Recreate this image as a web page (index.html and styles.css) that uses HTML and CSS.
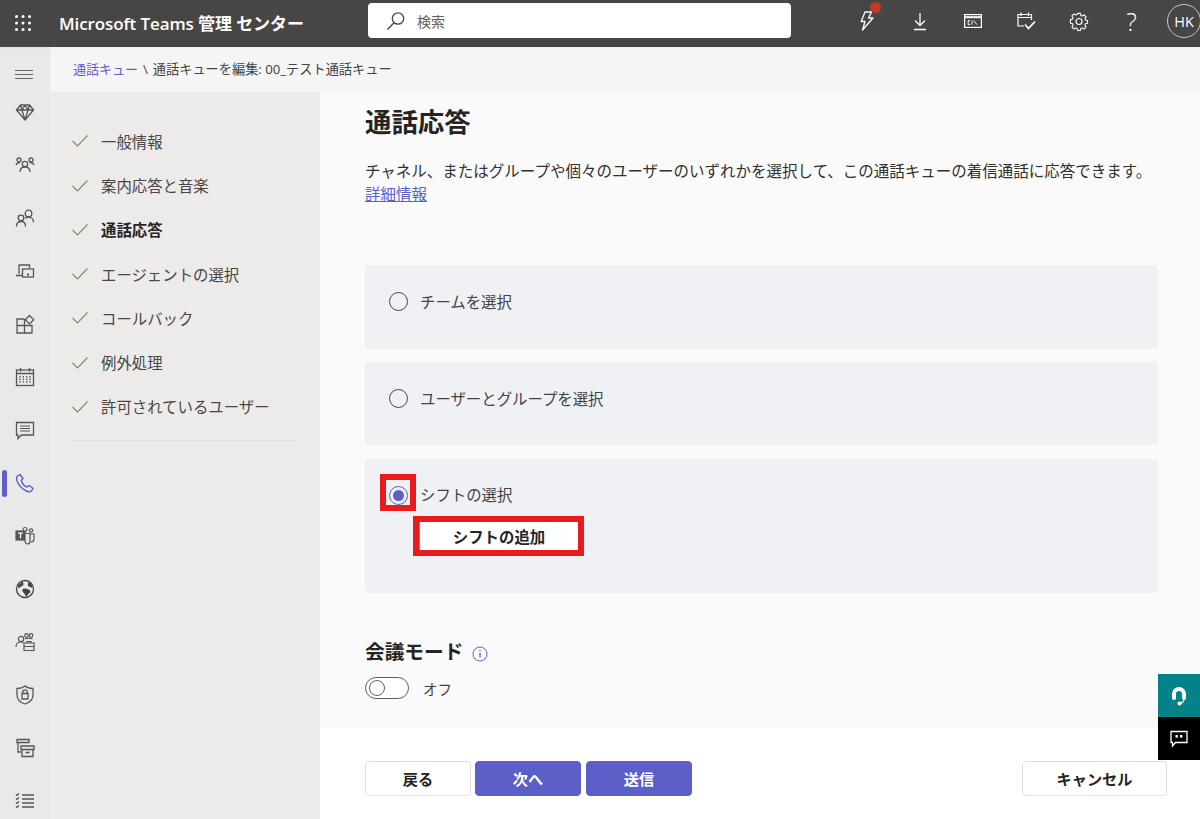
FILE: index.html
```html
<!DOCTYPE html>
<html lang="ja">
<head>
    <meta charset="UTF-8">
    <meta name="viewport" content="width=device-width, initial-scale=1.0">
    <title>Microsoft Teams 管理 センター</title>
    <link rel="stylesheet" href="styles.css">
</head>
<body>
    <header class="topbar">
        <div class="waffle">
            <svg width="18" height="18" viewBox="0 0 18 18" fill="#fff"><circle cx="2.5" cy="2.5" r="1.5"/><circle cx="9" cy="2.5" r="1.5"/><circle cx="15.5" cy="2.5" r="1.5"/><circle cx="2.5" cy="9" r="1.5"/><circle cx="9" cy="9" r="1.5"/><circle cx="15.5" cy="9" r="1.5"/><circle cx="2.5" cy="15.5" r="1.5"/><circle cx="9" cy="15.5" r="1.5"/><circle cx="15.5" cy="15.5" r="1.5"/></svg>
        </div>
        <div class="brand">Microsoft Teams 管理 センター</div>
        <div class="search">
            <svg width="20" height="20" viewBox="0 0 20 20" fill="none" stroke="#444" stroke-width="1.3"><circle cx="12" cy="7.5" r="5.7"/><path d="M8 11.7 1.5 18.5"/></svg>
            <span>検索</span>
        </div>
        <nav class="top-icons">
            <div class="top-icon bolt">
                <svg width="20" height="22" viewBox="0 0 20 22" fill="none" stroke="#fff" stroke-width="1.3" stroke-linejoin="round"><path d="M8 2h6.5l-3 6h4.5L5.5 20l2.5-8.5H4.2z"/></svg>
                <span class="dot"></span>
            </div>
            <div class="top-icon">
                <svg width="18" height="20" viewBox="0 0 18 20" fill="none" stroke="#fff" stroke-width="1.3"><path d="M9 2v12M4 9.5l5 5 5-5M3 18.5h12"/></svg>
            </div>
            <div class="top-icon">
                <svg width="20" height="16" viewBox="0 0 20 16" fill="none" stroke="#fff" stroke-width="1.2"><rect x="1.6" y="1.6" width="16.8" height="12.8"/><path d="M1.6 4.2h16.8" stroke-width="2"/><path d="M7 7.6H5.2v4H7M9 7.6v4M10.6 7.6l3.4 4" stroke-width="1"/></svg>
            </div>
            <div class="top-icon">
                <svg width="20" height="20" viewBox="0 0 20 20" fill="none" stroke="#fff" stroke-width="1.2"><path d="M8 15H2V3.5h13.5V9M2 6.5h13.5M5 1.5v3.5M12.5 1.5v3.5"/><path d="m9 13.5 3.5 4 6.5-7" stroke-width="1.8"/></svg>
            </div>
            <div class="top-icon">
                <svg width="20" height="20" viewBox="0 0 20 20" fill="none" stroke="#fff" stroke-width="1.2" stroke-linejoin="round"><path d="M8.4 1.5h3.2l.5 2.3 1.5.6 2-1.3 2.3 2.3-1.3 2 .6 1.500 2.300.5v3.200l-2.300.5-.6 1.500 1.300 2-2.300 2.300-2-1.300-1.500.6-.5 2.300H8.400l-.5-2.300-1.500-.6-2 1.300-2.300-2.300 1.300-2-.6-1.500-2.300-.5V8.400l2.300-.5.6-1.500-1.300-2 2.300-2.300 2 1.300 1.500-.6z" transform="translate(1 1) scale(.9)"/><circle cx="10" cy="10.500" r="3"/></svg>
            </div>
            <div class="top-icon help">?</div>
        </nav>
        <div class="avatar">HK</div>
    </header>

    <div class="layout">
        <aside class="rail">
            <div class="rail-menu">
                <svg width="18" height="24" viewBox="0 0 18 24" fill="none" stroke="#666" stroke-width="1"><path d="M0 8.500h18M0 12.500h18M0 16.500h18"/></svg>
            </div>
            <div class="rail-item">
                <svg width="20" height="20" viewBox="0 0 20 20" fill="none" stroke="#555" stroke-width="1.3" stroke-linejoin="round"><path d="M5.500 3h9l4 5-8.500 10L1.500 8zM1.500 8h17M7 8l3 10 3-10M5.500 3 7 8l3-5 3 5 1.500-5"/></svg>
            </div>
            <div class="rail-item">
                <svg width="20" height="20" viewBox="0 0 20 20" fill="none" stroke="#555" stroke-width="1.3"><circle cx="10" cy="9" r="2.700"/><circle cx="4" cy="5" r="2"/><circle cx="16" cy="5" r="2"/><path d="M5 17c0-3 2-5 5-5s5 2 5 5M1 10c.5-1.500 1.500-2.500 4-2.500M19 10c-.5-1.500-1.500-2.500-4-2.500"/></svg>
            </div>
            <div class="rail-item">
                <svg width="20" height="20" viewBox="0 0 20 20" fill="none" stroke="#555" stroke-width="1.3"><circle cx="13.500" cy="5.500" r="3.300"/><circle cx="6" cy="10" r="2.800"/><path d="M1.500 18.500c0-3 1.800-5 4.500-5s4.500 2 4.500 5M10.500 10.500c.8-.8 1.800-1.300 3-1.300 2.800 0 5 2 5 5"/></svg>
            </div>
            <div class="rail-item">
                <svg width="20" height="20" viewBox="0 0 20 20" fill="none" stroke="#555" stroke-width="1.300"><path d="M4 13V4h10.500v3M1 14.500h6"/><rect x="7.500" y="8" width="11" height="8" /><path d="M12 13.500h2" stroke-width="1.800"/></svg>
            </div>
            <div class="rail-item">
                <svg width="20" height="20" viewBox="0 0 20 20" fill="none" stroke="#555" stroke-width="1.300"><path d="M9.500 5H2v14h15v-7.500H2M9.500 5v14"/><path d="m14.500 1.500 4.200 4.200-4.200 4.200-4.200-4.200z"/></svg>
            </div>
            <div class="rail-item">
                <svg width="20" height="20" viewBox="0 0 20 20" fill="none" stroke="#555" stroke-width="1.300"><rect x="1.500" y="3" width="17" height="15.500"/><path d="M1.500 6.500h17M5.500 1v3.500M14.500 1v3.500"/><path d="M5 9v7.500M8.300 9v7.500M11.700 9v7.500M15 9v7.500" stroke-dasharray="1.500 1"/></svg>
            </div>
            <div class="rail-item">
                <svg width="20" height="20" viewBox="0 0 20 20" fill="none" stroke="#555" stroke-width="1.300"><path d="M1.500 2.500h17v12.500H6.500l-3.500 3.500V15H1.500z"/><path d="M5 6h10M5 8.500h10M5 11h10" stroke-width="1"/></svg>
            </div>
            <div class="rail-item active">
                <svg width="20" height="20" viewBox="0 0 20 20" fill="none" stroke="#5b5fc7" stroke-width="1.400" stroke-linejoin="round"><path d="M2 3.500 5 1.500l3 4-1.700 2c.5 2.500 3.200 5.800 5.700 6.500l2-1.500 4 2.800-1.500 2.700c-1 1-3 1-5 0-4.500-2-7.500-5.500-9.500-10-.6-1.500-.6-3 0-4.500z"/></svg>
            </div>
            <div class="rail-item">
                <svg width="20" height="20" viewBox="0 0 20 20" fill="none" stroke="#555" stroke-width="1.200"><rect x="1" y="5" width="9" height="9" fill="#555"/><path d="M3.200 7.200h4.600M5.500 7.200v5" stroke="#fff" stroke-width="1.300"/><circle cx="10" cy="3.500" r="2"/><circle cx="16" cy="4.500" r="1.700"/><path d="M10 14c0 3 1 4 2.500 4s2.500-1 2.500-3V7.500h-5M15 8h4v5c0 2-1 3-3 3"/></svg>
            </div>
            <div class="rail-item">
                <svg width="20" height="20" viewBox="0 0 20 20"><circle cx="10" cy="10" r="8.500" fill="none" stroke="#444" stroke-width="1.300"/><path d="M3 6c2-1 3-2 4-3.500 1.500 1 2 2.500 1 4-1 1-3 1-3.500 2.500S3 8 3 6zM8 10c2-1 5 0 7 1.500 1 1.500-.5 3-2 3.500-.5 1.500-1 2.500-2 2.500-.5-2-2-3-3-4.500S7 11 8 10zM13.500 3c2 .8 3.500 2.500 4 5.500-1.500 0-4-.5-4.500-2s0-2 .5-3.500z" fill="#444"/></svg>
            </div>
            <div class="rail-item">
                <svg width="20" height="20" viewBox="0 0 20 20" fill="none" stroke="#555" stroke-width="1.200"><circle cx="6" cy="7" r="2.600"/><circle cx="11.500" cy="3.500" r="1.800"/><circle cx="16" cy="3.500" r="1.800"/><path d="M1 15c0-3 2-5 5-5 1 0 1.700.2 2.300.6M10 7c1-1 5-1 7.500 0M9 11h10v7.500H9zM12 11V9.500h4V11M9 14.500h10"/></svg>
            </div>
            <div class="rail-item">
                <svg width="20" height="20" viewBox="0 0 20 20" fill="none" stroke="#555" stroke-width="1.300"><path d="M10 1c2 1.700 5 2.500 8 2.500V10c0 4.500-3.500 7.500-8 9-4.500-1.500-8-4.500-8-9V3.500C5 3.500 8 2.700 10 1z"/><path d="M7 8.500h6v5.500H7zM7.800 8.500V7a2.200 2.200 0 0 1 4.400 0v1.500"/></svg>
            </div>
            <div class="rail-item">
                <svg width="20" height="20" viewBox="0 0 20 20" fill="none" stroke="#555" stroke-width="1.300"><path d="M2 1.500h12v3H2zM3 4.500V14h3"/><path d="M6 8h13v3.500H6zM7 11.500v7h11v-7"/><path d="M10.500 14.500h4" stroke-width="1.600"/></svg>
            </div>
            <div class="rail-item">
                <svg width="20" height="20" viewBox="0 0 20 20" fill="none" stroke="#555" stroke-width="1.200"><path d="M7 4h12M7 8h12M7 12h12M7 16h12" stroke-width="1.300"/><path d="m1 3.500 1 1 2-2M1 7.500l1 1 2-2M1 11.500l1 1 2-2M1 15.500l1 1 2-2"/></svg>
            </div>
        </aside>

        <div class="page">
            <div class="crumb"><a href="#">通話キュー</a><span class="crumb-sep">\</span>通話キューを編集: 00_テスト通話キュー</div>
            <div class="page-body">
                <aside class="steps">
                    <ul class="step-list">
                        <li class="step"><svg class="check" width="16" height="12" viewBox="0 0 16 12" fill="none" stroke="#6f9450" stroke-width="1.100"><path d="m.5 6 5 5L15.500.5"/></svg>一般情報</li>
                        <li class="step"><svg class="check" width="16" height="12" viewBox="0 0 16 12" fill="none" stroke="#6f9450" stroke-width="1.100"><path d="m.5 6 5 5L15.500.5"/></svg>案内応答と音楽</li>
                        <li class="step current"><svg class="check" width="16" height="12" viewBox="0 0 16 12" fill="none" stroke="#6f9450" stroke-width="1.100"><path d="m.5 6 5 5L15.500.5"/></svg>通話応答</li>
                        <li class="step"><svg class="check" width="16" height="12" viewBox="0 0 16 12" fill="none" stroke="#6f9450" stroke-width="1.100"><path d="m.5 6 5 5L15.500.5"/></svg>エージェントの選択</li>
                        <li class="step"><svg class="check" width="16" height="12" viewBox="0 0 16 12" fill="none" stroke="#6f9450" stroke-width="1.100"><path d="m.5 6 5 5L15.500.5"/></svg>コールバック</li>
                        <li class="step"><svg class="check" width="16" height="12" viewBox="0 0 16 12" fill="none" stroke="#6f9450" stroke-width="1.100"><path d="m.5 6 5 5L15.500.5"/></svg>例外処理</li>
                        <li class="step"><svg class="check" width="16" height="12" viewBox="0 0 16 12" fill="none" stroke="#6f9450" stroke-width="1.100"><path d="m.5 6 5 5L15.500.5"/></svg>許可されているユーザー</li>
                    </ul>
                </aside>
                <main class="main">
                    <div class="content">
                        <h1 class="title">通話応答</h1>
                        <p class="desc">チャネル、またはグループや個々のユーザーのいずれかを選択して、この通話キューの着信通話に応答できます。<br><a href="#">詳細情報</a></p>

                        <div class="card card-team">
                            <div class="option"><span class="radio"></span>チームを選択</div>
                        </div>
                        <div class="card card-user">
                            <div class="option"><span class="radio"></span>ユーザーとグループを選択</div>
                        </div>
                        <div class="card card-shift">
                            <div class="option option-marked">
                                <span class="mark"><span class="radio checked"></span></span><span class="marked-label">シフトの選択</span>
                            </div>
                            <div class="add-mark"><button class="add-button">シフトの追加</button></div>
                        </div>

                        <h2 class="sub-title">会議モード
                            <svg width="16" height="16" viewBox="0 0 16 16" fill="none" stroke="#5b5fc7"><circle cx="8" cy="8" r="7"/><path d="M8 7v4.500" stroke-width="1.300"/><circle cx="8" cy="4.800" r=".8" fill="#5b5fc7" stroke="none"/></svg>
                        </h2>
                        <div class="toggle-row"><span class="toggle"><span class="knob"></span></span>オフ</div>
                    </div>
                    <footer class="footer">
                        <button class="btn">戻る</button>
                        <button class="btn primary">次へ</button>
                        <button class="btn primary">送信</button>
                        <button class="btn cancel">キャンセル</button>
                    </footer>
                </main>
            </div>
        </div>
    </div>

    <div class="float-tools">
        <div class="float-tool help-tool">
            <svg width="18" height="20" viewBox="0 0 18 20"><path fill="#fff" d="M9 1a7 7 0 0 0-7 7v4a2 2 0 0 0 4 0V8a3 3 0 0 1 6 0v4a2 2 0 0 0 4 0V8a7 7 0 0 0-7-7z"/><path d="M14 13c0 2.500-2 4-4 4.500" fill="none" stroke="#fff" stroke-width="1.200"/><circle cx="9.500" cy="17.500" r="2" fill="#fff"/></svg>
        </div>
        <div class="float-tool chat-tool">
            <svg width="18" height="18" viewBox="0 0 18 18" fill="none" stroke="#fff" stroke-width="1.300"><path d="M1 1.500h16v11H5.500L2.500 16v-3.500H1z"/><rect x="5.500" y="5" width="2.400" height="2.600" fill="#fff" stroke="none"/><rect x="10" y="5" width="2.400" height="2.600" fill="#fff" stroke="none"/></svg>
        </div>
    </div>
</body>
</html>
```

FILE: styles.css
```css
* {
    box-sizing: border-box;
}
html, body {
    margin: 0;
    height: 819px;
    overflow: hidden;
}
body {
    font-family: "Open Sans", "Noto Sans CJK JP", sans-serif;
    color: #252423;
    background: #fff;
    position: relative;
}
a {
    color: #5b5fc7;
    text-decoration: none;
}

/* top bar */
.topbar {
    height: 47px;
    background: #484644;
    display: flex;
    align-items: center;
    color: #fff;
}
.topbar > * {
    flex: none;
}
.waffle {
    width: 46px;
    display: flex;
    justify-content: center;
    margin-bottom: 2px;
}
.brand {
    margin-left: 13px;
    width: 309px;
    font-size: 17px;
    font-weight: 600;
    letter-spacing: -0.1px;
    white-space: nowrap;
    margin-bottom: 3px;
}
.search {
    width: 423px;
    height: 35px;
    margin-bottom: 6px;
    background: #fff;
    border-radius: 4px;
    display: flex;
    align-items: center;
    gap: 11px;
    padding-left: 18px;
    font-size: 14px;
    color: #616161;
}
.top-icons {
    margin-left: 49px;
    display: flex;
    align-items: center;
}
.top-icon {
    width: 53px;
    height: 42px;
    display: flex;
    align-items: center;
    justify-content: center;
    position: relative;
    margin-bottom: 5px;
}
.help {
    font-size: 25px;
    font-weight: 300;
}
.dot {
    position: absolute;
    top: 2px;
    left: 30px;
    width: 11px;
    height: 11px;
    border-radius: 50%;
    background: #c4392a;
}
.avatar {
    margin-left: 9px;
    width: 34px;
    height: 34px;
    border: 1px solid #c8c6c4;
    border-radius: 50%;
    margin-bottom: 5px;
    display: flex;
    align-items: center;
    justify-content: center;
    font-size: 14.5px;
    font-weight: 400;
}

.layout {
    display: flex;
    height: 772px;
}

/* left rail */
.rail {
    width: 50px;
    flex: none;
    background: #e9e9e9;
    overflow: hidden;
    border-top: 2px solid #e3e3e3;
}
.rail-menu {
    height: 36.5px;
    padding-top: 13px;
    margin-left: 15px;
}
.rail-item {
    height: 53px;
    display: flex;
    align-items: center;
    justify-content: center;
    position: relative;
}
.rail-item.active::before {
    content: "";
    position: absolute;
    left: 2px;
    top: 13px;
    width: 5px;
    height: 27px;
    border-radius: 3px;
    background: #5b5fc7;
}

.page {
    flex: 1;
    display: flex;
    flex-direction: column;
    min-width: 0;
}
.crumb {
    height: 45px;
    background: #f5f5f5;
    padding: 11px 0 0 23px;
    font-size: 13.2px;
    line-height: 19px;
    color: #424242;
    border-top: 2px solid #f0f0f0;
}
.crumb a {
    font-size: 13px;
}
.crumb-sep {
    margin: 0 5px;
}
.page-body {
    flex: 1;
    display: flex;
    min-height: 0;
}

/* steps */
.steps {
    width: 270px;
    flex: none;
    background: #edebe9;
    padding: 27.3px 24px 0 22px;
}
.step-list {
    list-style: none;
    margin: 0;
    padding: 0 0 11px;
    border-bottom: 1px solid #e1dfdd;
}
.step {
    height: 44.25px;
    display: flex;
    align-items: center;
    gap: 13px;
    font-size: 15.4px;
    color: #484644;
}
.step.current {
    font-weight: 700;
    color: #252423;
}
.check {
    flex: none;
}

/* main area */
.main {
    flex: 1;
    display: flex;
    flex-direction: column;
    min-width: 0;
}
.content {
    height: 636px;
    background: #fafafa;
    padding: 0 42px 0 45px;
    overflow: hidden;
}
.title {
    margin: 10px 0 0;
    font-size: 26.4px;
    line-height: 40px;
    font-weight: 700;
    color: #252423;
}
.desc {
    margin: 18px 0 0;
    font-size: 15.5px;
    line-height: 23px;
    color: #323130;
    white-space: nowrap;
}
.desc a {
    text-decoration: underline;
}
.card {
    background: #f0f1f5;
    border-radius: 4px;
}
.card-team {
    margin-top: 59px;
    height: 84px;
    padding: 26px 0 0 24px;
}
.card-user {
    margin-top: 13px;
    height: 83px;
    padding: 26px 0 0 24px;
}
.card-shift {
    margin-top: 14px;
    height: 134px;
    padding: 15px 0 0 15px;
}
.option {
    display: flex;
    align-items: center;
    gap: 12px;
    font-size: 15.4px;
    line-height: 24px;
    color: #424242;
}
.option-marked {
    gap: 4px;
}
.marked-label {
    margin-top: 7px;
}
.radio {
    width: 19px;
    height: 19px;
    margin-bottom: 4px;
    border: 1px solid #484644;
    border-radius: 50%;
    flex: none;
    position: relative;
}
.radio.checked {
    margin-bottom: 0;
    border-color: #5b5fc7;
}
.radio.checked::after {
    content: "";
    position: absolute;
    inset: 3px;
    border-radius: 50%;
    background: #5b5fc7;
}
.mark {
    width: 36px;
    height: 37px;
    border: 6px solid #e81c1c;
    display: flex;
    align-items: flex-end;
    justify-content: center;
}
.add-mark {
    width: 171px;
    height: 40px;
    margin: 5px 0 0 33px;
    border: 6px solid #e81c1c;
}
.add-button {
    width: 100%;
    height: 100%;
    display: block;
    border: 0;
    border-left: 1px solid #8a8886;
    background: #fff;
    font: 700 15.4px "Noto Sans CJK JP", sans-serif;
    color: #252423;
    padding: 0 0 1px;
}
.sub-title {
    margin: 44px 0 0;
    font-size: 19.7px;
    line-height: 30px;
    font-weight: 700;
    display: flex;
    align-items: center;
    gap: 9px;
}
.sub-title svg {
    margin-top: 3px;
}
.toggle-row {
    margin-top: 10px;
    display: flex;
    align-items: center;
    gap: 14px;
    font-size: 14.5px;
    color: #424242;
}
.toggle {
    width: 44px;
    height: 22px;
    border: 1px solid #616161;
    border-radius: 11px;
    background: #fff;
    padding: 2px 0 0 3px;
    flex: none;
}
.knob {
    display: block;
    width: 16px;
    height: 16px;
    border: 1px solid #616161;
    border-radius: 50%;
}

/* footer buttons */
.footer {
    flex: 1;
    background: #fff;
    display: flex;
    gap: 4px;
    padding: 33px 33px 0 45px;
    align-items: flex-start;
}
.btn {
    width: 106px;
    height: 35px;
    background: #fff;
    border: 1px solid #e0e0e0;
    border-radius: 4px;
    font: 700 15.2px "Noto Sans CJK JP", sans-serif;
    color: #252423;
    padding: 0 0 2px;
}
.btn.primary {
    background: #5b5fc7;
    border-color: #5b5fc7;
    color: #fff;
}
.btn.primary + .btn.primary {
    margin-left: 1px;
}
.btn.cancel {
    width: 145px;
    margin-left: auto;
}

/* floating side tools */
.float-tools {
    position: absolute;
    right: 0;
    top: 674px;
    width: 42px;
}
.float-tool {
    height: 43px;
    display: flex;
    align-items: center;
    justify-content: center;
}
.help-tool {
    background: #038387;
}
.chat-tool {
    background: #000;
}
```
